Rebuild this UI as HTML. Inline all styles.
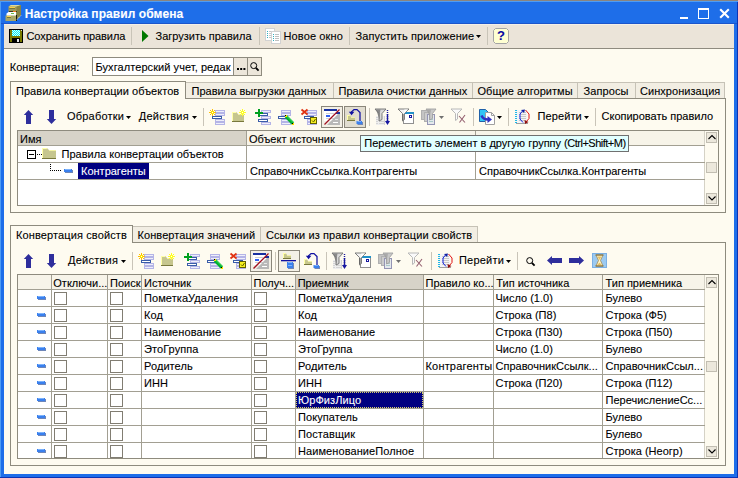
<!DOCTYPE html>
<html lang="ru">
<head>
<meta charset="utf-8">
<title>Настройка правил обмена</title>
<style>
html,body{margin:0;padding:0;}
body{width:738px;height:478px;overflow:hidden;position:relative;background:#FEFBF0;font-family:"Liberation Sans",sans-serif;font-size:11px;color:#000;-webkit-text-stroke-width:0.1px;}
.a{position:absolute;}
.t{position:absolute;white-space:nowrap;line-height:13px;height:13px;}
.win{left:0;top:0;width:738px;height:478px;background:#1E6EE9;}
.client{left:4px;top:24px;width:730px;height:450px;background:#FEFBF0;}
.title{left:24.7px;top:7px;font-size:12px;font-weight:bold;color:#fff;line-height:15px;height:15px;letter-spacing:0.07px;}
.tb{left:4px;top:24px;width:730px;height:24px;background:#EBE4D9;border-bottom:1px solid #8F8B80;}
.sep{position:absolute;width:1px;background:#C9C4B8;}
.panel{position:absolute;border:1px solid #8E8B7E;box-sizing:border-box;background:#FEFBF0;}
.tab{position:absolute;box-sizing:border-box;border:1px solid #C6C2B6;border-bottom:none;background:#F2EEE3;height:16px;top:1px;}
.tab.act{background:#FEFBF0;height:18px;top:0;border-color:#8E8B7E;z-index:2;}
.tab span{position:absolute;left:6px;top:1.5px;white-space:nowrap;line-height:13px;}
.tab.act span{top:2.5px;}
.grid{position:absolute;background:#fff;border:1px solid #8E8B7E;box-sizing:border-box;overflow:hidden;}
.hl{position:absolute;height:1px;background:#A29F92;}
.vl{position:absolute;width:1px;background:#A29F92;}
.hd{position:absolute;background:#F7F4E9;}
.hd.dk{background:#D7D3C8;}
.cb{position:absolute;width:13px;height:13px;box-sizing:border-box;border:1px solid #817D72;background:#fff;}
.sb{position:absolute;width:11px;height:11px;box-sizing:border-box;border:1px solid #C2BEB2;background:#ECE8DC;}
.btn{position:absolute;width:22px;height:22px;box-sizing:border-box;border:1px solid #8A867A;background:#F3F0E6;}
.ic{position:absolute;width:16px;height:16px;overflow:visible;}
.dash{position:absolute;width:9px;height:4px;}
svg{position:absolute;overflow:visible;}
</style>
</head>
<body>
<div class="a win"></div>
<div class="a" style="left:0;top:0;width:738px;height:1px;background:#8A847E"></div>
<div class="a" style="left:0;top:1px;width:738px;height:1px;background:#4E9CF5"></div>
<div class="a" style="left:0;top:1px;width:1px;height:477px;background:#4E9CF5"></div>
<div class="a" style="left:0;top:477px;width:738px;height:1px;background:#0C34B4"></div>
<div class="a" style="left:737px;top:2px;width:1px;height:476px;background:#0C34B4"></div>
<div class="a client"></div>
<div class="a" style="left:1px;top:23px;width:736px;height:1px;background:#1B55CB"></div>
<div class="t title">Настройка правил обмена</div>
<svg style="left:5px;top:4px" width="17" height="17" viewBox="0 0 17 17">
<polygon points="3.5,2.5 6,1 16,1 16,11 11.5,16 3.5,16" fill="#9C9A5C"/>
<polygon points="3.5,2.5 6,1 16,1 13.5,2.5" fill="#DDD99A"/>
<polygon points="11.5,2.5 16,1 16,11 11.5,16" fill="#858345"/>
<rect x="4.5" y="3" width="5.5" height="1" fill="#F8D048"/>
<rect x="4.5" y="4" width="5.5" height="1" fill="#77753C"/>
<rect x="4" y="7" width="8" height="1" fill="#38381E"/>
<rect x="8" y="7" width="3" height="1" fill="#F07818"/>
<polygon points="1.5,9.5 3.5,8 11,8 11,12 1.5,12" fill="#FFFFFF"/>
<rect x="6" y="9" width="3" height="1" fill="#68C048"/>
<rect x="0.5" y="11.5" width="10.5" height="5.5" fill="#A9A768"/>
<rect x="2" y="12" width="4" height="1" fill="#F8D048"/>
<rect x="2" y="13" width="4" height="1" fill="#77753C"/>
<rect x="11" y="11" width="1" height="6" fill="#1C1C10"/>
<path d="M12,15.5 L16,11.5" stroke="#fff" stroke-width="0.8" stroke-dasharray="1.2,1"/>
</svg>
<div class="a" style="left:680px;top:17px;width:8px;height:2px;background:#fff"></div>
<div class="a" style="left:698px;top:8px;width:11px;height:11px;box-sizing:border-box;border:1px solid #fff;border-top-width:2px"></div>
<svg style="left:719px;top:8px" width="11" height="11" viewBox="0 0 11 11"><path d="M1.2,1.2 L9.8,9.8 M9.8,1.2 L1.2,9.8" stroke="#fff" stroke-width="2.1" fill="none"/></svg>
<div class="a tb"></div>
<div class="a" style="left:4px;top:24px;width:730px;height:1px;background:#F4F0E8"></div>
<svg style="left:9px;top:29px" width="14" height="14" viewBox="0 0 14 14">
<rect x="0" y="0" width="14" height="14" fill="#000"/>
<rect x="1" y="1" width="12" height="12" fill="#7A7A00"/>
<defs><pattern id="dth" width="2" height="2" patternUnits="userSpaceOnUse"><rect width="2" height="2" fill="#00F0F0"/><rect width="1" height="1" fill="#D8FFFF"/><rect x="1" y="1" width="1" height="1" fill="#D8FFFF"/></pattern></defs><rect x="3" y="1" width="8" height="6" fill="url(#dth)"/>
<rect x="3" y="9" width="8" height="4" fill="#000"/>
<rect x="8" y="10" width="2" height="3" fill="#E8E8E8"/>
<rect x="12" y="1" width="1" height="1" fill="#E0E0E0"/>
</svg>
<div class="t" style="left:26.5px;top:29.5px;letter-spacing:-0.1px">Сохранить правила</div>
<div class="sep" style="left:131px;top:27px;height:18px"></div>
<svg style="left:142px;top:30px" width="7" height="12" viewBox="0 0 7 12"><polygon points="0,0 6.5,6 0,12" fill="#007800"/></svg>
<div class="t" style="left:155.5px;top:29.5px">Загрузить правила</div>
<div class="sep" style="left:259px;top:27px;height:18px"></div>
<svg style="left:265px;top:28px" width="16" height="16" viewBox="0 0 16 16">
<rect x="0.5" y="0.5" width="9" height="12" fill="#fff" stroke="#D2D2D2"/>
<g fill="#30B0C0"><rect x="2" y="3" width="1" height="1"/><rect x="2" y="5" width="1" height="1"/><rect x="2" y="7" width="1" height="1"/><rect x="2" y="9" width="1" height="1"/></g>
<g fill="#C8C8C8"><rect x="4" y="3" width="4" height="1"/><rect x="4" y="5" width="4" height="1"/><rect x="4" y="7" width="4" height="1"/><rect x="4" y="9" width="4" height="1"/></g>
<rect x="6.5" y="3.5" width="9" height="12" fill="#fff" stroke="#D2D2D2"/>
<g fill="#30B0C0"><rect x="8" y="6" width="1" height="1"/><rect x="8" y="8" width="1" height="1"/><rect x="8" y="10" width="1" height="1"/><rect x="8" y="12" width="1" height="1"/></g>
<g fill="#C0C0C0"><rect x="10" y="6" width="4" height="1"/><rect x="10" y="8" width="4" height="1"/><rect x="10" y="10" width="4" height="1"/><rect x="10" y="12" width="4" height="1"/></g>
</svg>
<div class="t" style="left:283.5px;top:29.5px;letter-spacing:0.12px">Новое окно</div>
<div class="sep" style="left:349px;top:27px;height:18px"></div>
<div class="t" style="left:355.5px;top:29.5px;letter-spacing:0.08px">Запустить приложение</div>
<svg style="left:476px;top:35px" width="5" height="3" viewBox="0 0 5 3"><polygon points="0,0 5,0 2.5,3" fill="#000"/></svg>
<div class="sep" style="left:487px;top:27px;height:18px"></div>
<svg style="left:493px;top:28px" width="16" height="16" viewBox="0 0 16 16">
<polygon points="2.5,0.5 13.5,0.5 15.5,2.5 15.5,13.5 13.5,15.5 2.5,15.5 0.5,13.5 0.5,2.5" fill="#FFFFD2" stroke="#A4A4A4"/>
</svg>
<div class="t" style="left:497px;top:29px;font-weight:bold;font-size:13px;color:#0808A0;line-height:14px;height:14px">?</div>
<div class="t" style="left:9.7px;top:60.5px;letter-spacing:0.08px">Конвертация:</div>
<div class="a" style="left:92px;top:57px;width:170px;height:19px;box-sizing:border-box;border:1px solid #8E8B7E;background:#fff"></div>
<div class="t" style="left:95.5px;top:61px;letter-spacing:0.07px">Бухгалтерский учет, редак</div>
<div class="a" style="left:233px;top:58px;width:15px;height:17px;background:#ECE6DA;border-left:1px solid #8E8B7E;border-right:1px solid #8E8B7E;box-sizing:border-box"></div>
<div class="a" style="left:248px;top:58px;width:13px;height:17px;background:#ECE6DA"></div>
<div class="a" style="left:237px;top:68.2px;width:1.7px;height:1.8px;background:#000;box-shadow:3.2px 0 0 #000,6.4px 0 0 #000"></div>
<svg style="left:250px;top:62px" width="10" height="10" viewBox="0 0 10 10"><circle cx="3.7" cy="3.6" r="3" fill="none" stroke="#000" stroke-width="1"/><path d="M5.9,5.9 L8.6,8.6" stroke="#000" stroke-width="1.9"/></svg>
<div class="panel" style="left:10px;top:98px;width:716px;height:115px"></div>
<div class="a" style="left:10px;top:81px;width:716px;height:18px">
  <div class="tab act" style="left:0px;width:176px"><span style="left:5px;letter-spacing:0.04px">Правила конвертации объектов</span></div>
  <div class="tab" style="left:175px;width:149px"><span style="left:5.5px;letter-spacing:0.03px">Правила выгрузки данных</span></div>
  <div class="tab" style="left:323px;width:140px"><span style="left:4.5px;letter-spacing:0.03px">Правила очистки данных</span></div>
  <div class="tab" style="left:462px;width:106px"><span style="left:4.5px;letter-spacing:0.05px">Общие алгоритмы</span></div>
  <div class="tab" style="left:567px;width:59px"><span style="left:5.5px;letter-spacing:0.1px">Запросы</span></div>
  <div class="tab" style="left:625px;width:90px"><span style="left:4px;letter-spacing:0.05px">Синхронизация</span></div>
</div>
<svg style="left:24px;top:110px" width="10" height="14" viewBox="0 0 10 14"><polygon points="4.5,0 9.2,5 7,5 7,14 2,14 2,5 -0.2,5" fill="#2E2E9C"/></svg>
<svg style="left:47px;top:110px" width="10" height="14" viewBox="0 0 10 14"><polygon points="2,0 7,0 7,9 9.2,9 4.5,14 -0.2,9 2,9" fill="#2E2E9C"/></svg>
<div class="t" style="left:67px;top:110.3px;letter-spacing:0.2px">Обработки</div>
<svg style="left:126px;top:116px" width="5" height="3" viewBox="0 0 5 3"><polygon points="0,0 5,0 2.5,3" fill="#000"/></svg>
<div class="t" style="left:138.7px;top:110.3px;letter-spacing:0.25px">Действия</div>
<svg style="left:192px;top:116px" width="5" height="3" viewBox="0 0 5 3"><polygon points="0,0 5,0 2.5,3" fill="#000"/></svg>
<div class="sep" style="left:203px;top:108px;height:18px"></div>
<svg class="ic" style="left:209px;top:109px" viewBox="0 0 16 16"><rect x="6" y="1" width="10" height="3" fill="#B4B4E6"/><rect x="7" y="2" width="8" height="1" fill="#EEEEFA"/><rect x="6" y="4" width="10" height="3" fill="#B4B4E6"/><rect x="7" y="5" width="8" height="1" fill="#EEEEFA"/><rect x="3" y="7" width="10" height="3" fill="#3A5CA8"/><rect x="4" y="8" width="8" height="1" fill="#fff"/><rect x="6" y="10" width="10" height="3" fill="#B4B4E6"/><rect x="7" y="11" width="8" height="1" fill="#EEEEFA"/><rect x="6" y="13" width="10" height="3" fill="#B4B4E6"/><rect x="7" y="14" width="8" height="1" fill="#EEEEFA"/><g stroke="#FFC000" stroke-width="1"><path d="M3.5,0 V7 M0,3.5 H7 M1,1 L6,6 M6,1 L1,6"/></g><rect x="2" y="2" width="3" height="3" fill="#FFE000"/><rect x="3" y="3" width="1" height="1" fill="#fff"/></svg>
<svg class="ic" style="left:232px;top:109px" viewBox="0 0 16 16"><polygon points="0,3 4.199999999999999,3 6.0,5 12,5 12,13 0,13" fill="#C6C68E"/><rect x="0" y="3" width="1" height="10" fill="#FFFFA8"/><rect x="0" y="3" width="4.199999999999999" height="1" fill="#FFFFA8"/><rect x="6.0" y="5" width="6.0" height="1" fill="#F2F2A4"/><rect x="0" y="12" width="12" height="1" fill="#78783C"/><g stroke="#FFFF20" stroke-width="1"><path d="M10.5,0 V7 M7,3.5 H14 M8,1 L13,6 M13,1 L8,6"/></g><rect x="10" y="3" width="1" height="1" fill="#fff"/></svg>
<svg class="ic" style="left:255px;top:109px" viewBox="0 0 16 16"><rect x="6" y="1" width="10" height="3" fill="#B4B4E6"/><rect x="7" y="2" width="8" height="1" fill="#EEEEFA"/><rect x="3" y="4" width="10" height="3" fill="#3A5CA8"/><rect x="4" y="5" width="8" height="1" fill="#fff"/><rect x="6" y="7" width="10" height="3" fill="#B4B4E6"/><rect x="7" y="8" width="8" height="1" fill="#EEEEFA"/><rect x="3" y="10" width="10" height="3" fill="#3A5CA8"/><rect x="4" y="11" width="8" height="1" fill="#fff"/><rect x="6" y="13" width="10" height="3" fill="#B4B4E6"/><rect x="7" y="14" width="8" height="1" fill="#EEEEFA"/><rect x="0" y="3" width="8" height="2" fill="#00A020"/><rect x="3" y="0" width="2" height="8" fill="#00A020"/></svg>
<svg class="ic" style="left:278px;top:109px" viewBox="0 0 16 16"><rect x="3" y="1" width="10" height="3" fill="#B4B4E6"/><rect x="4" y="2" width="8" height="1" fill="#EEEEFA"/><rect x="3" y="4" width="10" height="3" fill="#B4B4E6"/><rect x="4" y="5" width="8" height="1" fill="#EEEEFA"/><rect x="0" y="7" width="10" height="3" fill="#3A5CA8"/><rect x="1" y="8" width="8" height="1" fill="#fff"/><rect x="3" y="10" width="10" height="3" fill="#B4B4E6"/><rect x="4" y="11" width="8" height="1" fill="#EEEEFA"/><rect x="3" y="13" width="10" height="3" fill="#B4B4E6"/><rect x="4" y="14" width="8" height="1" fill="#EEEEFA"/><path d="M8,7.5 L15,14.5" stroke="#00B030" stroke-width="3.2"/><path d="M8.6,6.9 L15.6,13.9" stroke="#40E060" stroke-width="1"/><rect x="7" y="6" width="2" height="2" fill="#FFE000"/><rect x="7" y="6" width="1" height="1" fill="#000"/><rect x="14" y="14" width="2" height="2" fill="#FFE000"/><rect x="14" y="14" width="1" height="1" fill="#000"/></svg>
<svg class="ic" style="left:301px;top:109px" viewBox="0 0 16 16"><rect x="6" y="1" width="10" height="3" fill="#B4B4E6"/><rect x="7" y="2" width="8" height="1" fill="#EEEEFA"/><rect x="6" y="4" width="10" height="3" fill="#B4B4E6"/><rect x="7" y="5" width="8" height="1" fill="#EEEEFA"/><rect x="3" y="7" width="10" height="3" fill="#3A5CA8"/><rect x="4" y="8" width="8" height="1" fill="#fff"/><rect x="6" y="10" width="10" height="3" fill="#B4B4E6"/><rect x="7" y="11" width="8" height="1" fill="#EEEEFA"/><rect x="6" y="13" width="10" height="3" fill="#B4B4E6"/><rect x="7" y="14" width="8" height="1" fill="#EEEEFA"/><path d="M0.5,0.5 L6.5,5.5 M6.5,0.5 L0.5,5.5" stroke="#E03010" stroke-width="1.8"/><rect x="9.5" y="8.5" width="6" height="6" fill="#F8F020" stroke="#606000"/><path d="M11,11.5 L12.5,13 L14.5,10" stroke="#606000" stroke-width="1" fill="none"/></svg>
<div class="btn" style="left:321px;top:106px"></div>
<svg class="ic" style="left:324px;top:109px" viewBox="0 0 16 16"><rect x="0" y="0" width="13" height="12" fill="#fff"/><rect x="0" y="0" width="13" height="2" fill="#1830A0"/><rect x="2" y="4" width="8" height="1" fill="#D0D0D0"/><rect x="2" y="6" width="4" height="2" fill="#3060F0"/><rect x="2" y="9" width="8" height="1" fill="#D0D0D0"/><polygon points="16,3 16,16 3,16" fill="#B8B8B8"/><rect x="12" y="3" width="4" height="2" fill="#1830A0"/><rect x="9" y="13" width="5" height="1" fill="#fff"/><rect x="11" y="10" width="3" height="1" fill="#E8E8E8"/><path d="M0.5,15.5 L15.5,0.5" stroke="#A01020" stroke-width="1.3"/></svg>
<div class="btn" style="left:344px;top:106px;background:#E1DDD0"></div>
<svg class="ic" style="left:347px;top:109px" viewBox="0 0 16 16"><polygon points="0,6 2.8,6 4.0,8 8,8 8,12 0,12" fill="#C6C68E"/><rect x="0" y="6" width="1" height="6" fill="#FFFFA8"/><rect x="0" y="6" width="2.8" height="1" fill="#FFFFA8"/><rect x="4.0" y="8" width="4.0" height="1" fill="#F2F2A4"/><rect x="0" y="11" width="8" height="1" fill="#78783C"/><path d="M4.6,4 L4.6,2.8 L7,0.6 L10,0.6 L13,3.5 L13,12" stroke="#1010A0" stroke-width="1.25" fill="none"/><polygon points="1.8,2.8 7.4,2.8 4.6,6.2" fill="#1010A0"/><rect x="10.5" y="13" width="5.5" height="3" fill="#6E86B8"/><rect x="9.5" y="12" width="5.5" height="3" fill="#3A80EE"/><rect x="10.5" y="12" width="3.5" height="1" fill="#7CB2FA"/></svg>
<div class="sep" style="left:369px;top:108px;height:18px"></div>
<svg class="ic" style="left:375px;top:109px" viewBox="0 0 16 16"><g fill="#D4D4D4"><rect x="1" y="7" width="9" height="9" fill="#EEEEEE"/><rect x="1" y="8" width="2" height="1"/><rect x="1" y="10" width="2" height="1"/><rect x="1" y="12" width="2" height="1"/><rect x="1" y="14" width="2" height="1"/><rect x="4" y="12" width="5" height="1"/><rect x="4" y="14" width="5" height="1"/><rect x="9" y="7" width="1" height="9"/></g><polygon points="0,0 11,0 7.0,4.5 7.0,10.5 4.0,12 4.0,4.5" fill="#D8D8D8" stroke="#707070" stroke-width="0.9"/><polygon points="1,0.5 5.5,0.5 4.7,5 4.7,11" fill="#707070" opacity="0.75"/><path d="M12.5,1 V14" stroke="#1818A0" stroke-width="1.4" stroke-dasharray="1,1" /><path d="M12.5,5 V14" stroke="#1818A0" stroke-width="1.4"/><polygon points="10,12 15,12 12.5,16" fill="#1818A0"/></svg>
<svg class="ic" style="left:398px;top:109px" viewBox="0 0 16 16"><rect x="5.5" y="3.5" width="10" height="11" fill="#fff" stroke="#909090"/><rect x="6" y="3" width="10" height="2" fill="#2090C8"/><rect x="11" y="6" width="3" height="3" fill="#1818A0"/><rect x="12" y="7" width="1" height="1" fill="#fff"/><polygon points="0,0 11,0 6.5,4.5 6.5,10.5 4.5,12 4.5,4.5" fill="#F4F4F4" stroke="#707070" stroke-width="0.9"/><polygon points="6,4.5 10,0.5 6.3,0.5" fill="#fff"/><path d="M5,5 V11" stroke="#505050" stroke-width="1"/></svg>
<svg class="ic" style="left:421px;top:109px" viewBox="0 0 16 16"><rect x="0.5" y="1.5" width="7" height="9" fill="#C4C4C4" stroke="#B0B0B0"/><rect x="3.5" y="3.5" width="7" height="9" fill="#CCCCCC" stroke="#B0B0B0"/><rect x="6.5" y="5.5" width="7" height="10" fill="#E4E8EC" stroke="#9494B4"/><g fill="#A8C8C8"><rect x="8" y="8" width="4" height="1"/><rect x="8" y="10" width="4" height="1"/><rect x="8" y="12" width="4" height="1"/></g><polygon points="5,0 15,0 11.5,4.5 11.5,9.5 8.5,11 8.5,4.5" fill="#C8C8C8" stroke="#A0A0A0" stroke-width="0.9"/><polygon points="6,0.5 10.0,0.5 9.2,5 9.2,10" fill="#A0A0A0" opacity="0.75"/></svg>
<svg style="left:439px;top:116px" width="5" height="3" viewBox="0 0 5 3"><polygon points="0,0 5,0 2.5,3" fill="#707070"/></svg>
<svg class="ic" style="left:451px;top:109px" viewBox="0 0 16 16"><polygon points="0,0 11,0 6.5,4.5 6.5,10 4.5,11.5 4.5,4.5" fill="#FAFAFA" stroke="#B8B8B8" stroke-width="1"/><path d="M8,7 L14,13.5 M14,6 L8.5,13.5" stroke="#946070" stroke-width="1.1"/></svg>
<div class="sep" style="left:473px;top:108px;height:18px"></div>
<svg class="ic" style="left:479px;top:109px" viewBox="0 0 16 16"><polygon points="0.5,0.5 6.5,0.5 9.5,3.5 9.5,12.5 0.5,12.5" fill="#30C4F4" stroke="#2060A8"/><polygon points="6.5,3.5 12.5,3.5 15.5,6.5 15.5,15.5 6.5,15.5" fill="#fff" stroke="#A0A0A0"/><path d="M12.5,3.5 V6.5 H15.5" stroke="#A0A0A0" fill="none"/><path d="M2.5,6.5 Q4,10.5 9,10.5" stroke="#3030C0" stroke-width="2.4" fill="none"/><polygon points="8.5,7 13,10.5 8.5,14" fill="#3030C0"/></svg>
<svg style="left:497px;top:116px" width="5" height="3" viewBox="0 0 5 3"><polygon points="0,0 5,0 2.5,3" fill="#000"/></svg>
<div class="sep" style="left:508px;top:108px;height:18px"></div>
<svg class="ic" style="left:515px;top:109px" viewBox="0 0 16 16"><rect x="1" y="1" width="11" height="14" fill="#F4F4F4"/><rect x="1" y="14" width="12" height="1" fill="#A0A0A0"/><g fill="#20B8E8"><rect x="0" y="1" width="2" height="1"/><rect x="0" y="3" width="2" height="1"/><rect x="0" y="5" width="2" height="1"/><rect x="0" y="7" width="2" height="1"/><rect x="0" y="9" width="2" height="1"/><rect x="0" y="11" width="2" height="1"/><rect x="0" y="13" width="2" height="1"/></g><g fill="#C8C8C8"><rect x="4" y="3" width="7" height="1"/><rect x="4" y="5" width="7" height="1"/><rect x="4" y="7" width="7" height="1"/><rect x="4" y="9" width="7" height="1"/><rect x="4" y="11" width="7" height="1"/></g><path d="M8,13.5 L5,10 V5 L8,1.5" stroke="#1020E0" stroke-width="1" fill="none"/><polygon points="6,1 10,0.5 9,4" fill="#1020A0"/><path d="M10.5,1 L14,5 V9.5 L11,13" stroke="#E01010" stroke-width="1" fill="none"/><polygon points="9.5,11 13.5,13 10,15" fill="#901010"/></svg>
<div class="t" style="left:537.5px;top:110.3px;letter-spacing:0.1px">Перейти</div>
<svg style="left:584px;top:116px" width="5" height="3" viewBox="0 0 5 3"><polygon points="0,0 5,0 2.5,3" fill="#000"/></svg>
<div class="sep" style="left:595px;top:108px;height:18px"></div>
<div class="t" style="left:601.5px;top:110.3px">Скопировать правило</div>
<div class="grid" style="left:17px;top:130px;width:702px;height:76px">
  <div class="hd dk" style="left:0;top:0;width:228px;height:14px"></div>
  <div class="hd" style="left:229px;top:0;width:458px;height:14px"></div>
  <div class="a" style="left:687px;top:0;width:13px;height:74px;background:#FEFBF0"></div>
  <div class="vl" style="left:686px;top:0;height:74px;background:#D5D2C6"></div>
  <div class="hl" style="left:0;top:14px;width:687px"></div>
  <div class="hl" style="left:0;top:31px;width:687px"></div>
  <div class="hl" style="left:0;top:48px;width:687px"></div>
  <div class="vl" style="left:228px;top:0;height:49px"></div>
  <div class="vl" style="left:457px;top:0;height:49px"></div>
  <div class="t" style="left:2px;top:1.5px">Имя</div>
  <div class="t" style="left:231px;top:1.5px">Объект источник</div>
  <div class="a" style="left:9px;top:19px;width:9px;height:9px;box-sizing:border-box;border:1px solid #000;background:#fff"></div>
  <div class="a" style="left:11px;top:23px;width:5px;height:1px;background:#000"></div>
  <div class="a" style="left:19px;top:23px;width:5px;height:1px;background:repeating-linear-gradient(90deg,#000 0 1px,transparent 1px 2px)"></div>
  <svg style="left:24px;top:17px" width="14" height="11" viewBox="0 0 14 11"><polygon points="0,0 4.8999999999999995,0 7.0,2 14,2 14,11 0,11" fill="#C6C68E"/><rect x="0" y="0" width="1" height="11" fill="#FFFFA8"/><rect x="0" y="0" width="4.8999999999999995" height="1" fill="#FFFFA8"/><rect x="7.0" y="2" width="7.0" height="1" fill="#F2F2A4"/><rect x="0" y="10" width="14" height="1" fill="#78783C"/></svg>
  <div class="t" style="left:43.5px;top:17px">Правила конвертации объектов</div>
  <div class="a" style="left:32px;top:33px;width:1px;height:7px;background:repeating-linear-gradient(180deg,#000 0 1px,transparent 1px 2px)"></div>
  <div class="a" style="left:32px;top:39px;width:11px;height:1px;background:repeating-linear-gradient(90deg,#000 0 1px,transparent 1px 2px)"></div>
  <svg class="dash" style="left:46px;top:38px" viewBox="0 0 9 4"><rect x="1" y="1" width="8" height="3" fill="#6E86B8"/><rect x="0" y="0" width="8" height="3" fill="#3A80EE"/><rect x="1" y="0" width="6" height="1" fill="#7CB2FA"/></svg>
  <div class="a" style="left:60px;top:32px;width:71px;height:16px;background:#000080"></div>
  <div class="t" style="left:63px;top:34px;color:#fff">Контрагенты</div>
  <div class="t" style="left:232px;top:34px">СправочникСсылка.Контрагенты</div>
  <div class="t" style="left:461px;top:34px">СправочникСсылка.Контрагенты</div>
  <div class="sb" style="left:688px;top:1px"></div><svg style="left:690px;top:3px" width="8" height="7" viewBox="0 0 8 7"><path d="M0.5,5 L4,1.5 L7.5,5" stroke="#000" stroke-width="1.1" fill="none"/></svg>
  <div class="sb" style="left:688px;top:31px"></div>
  <div class="sb" style="left:688px;top:62px"></div><svg style="left:690px;top:64px" width="8" height="7" viewBox="0 0 8 7"><path d="M0.5,1.5 L4,5 L7.5,1.5" stroke="#000" stroke-width="1.1" fill="none"/></svg>
</div>
<div class="a" style="left:360px;top:135px;width:269px;height:17px;box-sizing:border-box;border:1px solid #707070;background:#E1FFFF"></div>
<div class="t" style="left:364.3px;top:137.2px">Переместить элемент в другую группу <span style="letter-spacing:-0.5px">(Ctrl+Shift+M)</span></div>
<div class="panel" style="left:10px;top:242px;width:716px;height:224px"></div>
<div class="a" style="left:10px;top:225px;width:716px;height:18px">
  <div class="tab act" style="left:0px;width:123px"><span style="left:5px;letter-spacing:0.12px">Конвертация свойств</span></div>
  <div class="tab" style="left:122px;width:129px"><span style="left:4.5px;letter-spacing:0.08px">Конвертация значений</span></div>
  <div class="tab" style="left:250px;width:218px"><span style="left:5px;letter-spacing:0.09px">Ссылки из правил конвертации свойств</span></div>
</div>
<svg style="left:24px;top:254px" width="10" height="14" viewBox="0 0 10 14"><polygon points="4.5,0 9.2,5 7,5 7,14 2,14 2,5 -0.2,5" fill="#2E2E9C"/></svg>
<svg style="left:47px;top:254px" width="10" height="14" viewBox="0 0 10 14"><polygon points="2,0 7,0 7,9 9.2,9 4.5,14 -0.2,9 2,9" fill="#2E2E9C"/></svg>
<div class="t" style="left:68px;top:254.3px;letter-spacing:0.25px">Действия</div>
<svg style="left:121px;top:260px" width="5" height="3" viewBox="0 0 5 3"><polygon points="0,0 5,0 2.5,3" fill="#000"/></svg>
<div class="sep" style="left:132px;top:252px;height:18px"></div>
<svg class="ic" style="left:138px;top:253px" viewBox="0 0 16 16"><rect x="6" y="1" width="10" height="3" fill="#B4B4E6"/><rect x="7" y="2" width="8" height="1" fill="#EEEEFA"/><rect x="6" y="4" width="10" height="3" fill="#B4B4E6"/><rect x="7" y="5" width="8" height="1" fill="#EEEEFA"/><rect x="3" y="7" width="10" height="3" fill="#3A5CA8"/><rect x="4" y="8" width="8" height="1" fill="#fff"/><rect x="6" y="10" width="10" height="3" fill="#B4B4E6"/><rect x="7" y="11" width="8" height="1" fill="#EEEEFA"/><rect x="6" y="13" width="10" height="3" fill="#B4B4E6"/><rect x="7" y="14" width="8" height="1" fill="#EEEEFA"/><g stroke="#FFC000" stroke-width="1"><path d="M3.5,0 V7 M0,3.5 H7 M1,1 L6,6 M6,1 L1,6"/></g><rect x="2" y="2" width="3" height="3" fill="#FFE000"/><rect x="3" y="3" width="1" height="1" fill="#fff"/></svg>
<svg class="ic" style="left:161px;top:253px" viewBox="0 0 16 16"><polygon points="0,3 4.199999999999999,3 6.0,5 12,5 12,13 0,13" fill="#C6C68E"/><rect x="0" y="3" width="1" height="10" fill="#FFFFA8"/><rect x="0" y="3" width="4.199999999999999" height="1" fill="#FFFFA8"/><rect x="6.0" y="5" width="6.0" height="1" fill="#F2F2A4"/><rect x="0" y="12" width="12" height="1" fill="#78783C"/><g stroke="#FFFF20" stroke-width="1"><path d="M10.5,0 V7 M7,3.5 H14 M8,1 L13,6 M13,1 L8,6"/></g><rect x="10" y="3" width="1" height="1" fill="#fff"/></svg>
<svg class="ic" style="left:184px;top:253px" viewBox="0 0 16 16"><rect x="6" y="1" width="10" height="3" fill="#B4B4E6"/><rect x="7" y="2" width="8" height="1" fill="#EEEEFA"/><rect x="3" y="4" width="10" height="3" fill="#3A5CA8"/><rect x="4" y="5" width="8" height="1" fill="#fff"/><rect x="6" y="7" width="10" height="3" fill="#B4B4E6"/><rect x="7" y="8" width="8" height="1" fill="#EEEEFA"/><rect x="3" y="10" width="10" height="3" fill="#3A5CA8"/><rect x="4" y="11" width="8" height="1" fill="#fff"/><rect x="6" y="13" width="10" height="3" fill="#B4B4E6"/><rect x="7" y="14" width="8" height="1" fill="#EEEEFA"/><rect x="0" y="3" width="8" height="2" fill="#00A020"/><rect x="3" y="0" width="2" height="8" fill="#00A020"/></svg>
<svg class="ic" style="left:207px;top:253px" viewBox="0 0 16 16"><rect x="3" y="1" width="10" height="3" fill="#B4B4E6"/><rect x="4" y="2" width="8" height="1" fill="#EEEEFA"/><rect x="3" y="4" width="10" height="3" fill="#B4B4E6"/><rect x="4" y="5" width="8" height="1" fill="#EEEEFA"/><rect x="0" y="7" width="10" height="3" fill="#3A5CA8"/><rect x="1" y="8" width="8" height="1" fill="#fff"/><rect x="3" y="10" width="10" height="3" fill="#B4B4E6"/><rect x="4" y="11" width="8" height="1" fill="#EEEEFA"/><rect x="3" y="13" width="10" height="3" fill="#B4B4E6"/><rect x="4" y="14" width="8" height="1" fill="#EEEEFA"/><path d="M8,7.5 L15,14.5" stroke="#00B030" stroke-width="3.2"/><path d="M8.6,6.9 L15.6,13.9" stroke="#40E060" stroke-width="1"/><rect x="7" y="6" width="2" height="2" fill="#FFE000"/><rect x="7" y="6" width="1" height="1" fill="#000"/><rect x="14" y="14" width="2" height="2" fill="#FFE000"/><rect x="14" y="14" width="1" height="1" fill="#000"/></svg>
<svg class="ic" style="left:230px;top:253px" viewBox="0 0 16 16"><rect x="6" y="1" width="10" height="3" fill="#B4B4E6"/><rect x="7" y="2" width="8" height="1" fill="#EEEEFA"/><rect x="6" y="4" width="10" height="3" fill="#B4B4E6"/><rect x="7" y="5" width="8" height="1" fill="#EEEEFA"/><rect x="3" y="7" width="10" height="3" fill="#3A5CA8"/><rect x="4" y="8" width="8" height="1" fill="#fff"/><rect x="6" y="10" width="10" height="3" fill="#B4B4E6"/><rect x="7" y="11" width="8" height="1" fill="#EEEEFA"/><rect x="6" y="13" width="10" height="3" fill="#B4B4E6"/><rect x="7" y="14" width="8" height="1" fill="#EEEEFA"/><path d="M0.5,0.5 L6.5,5.5 M6.5,0.5 L0.5,5.5" stroke="#E03010" stroke-width="1.8"/><rect x="9.5" y="8.5" width="6" height="6" fill="#F8F020" stroke="#606000"/><path d="M11,11.5 L12.5,13 L14.5,10" stroke="#606000" stroke-width="1" fill="none"/></svg>
<div class="btn" style="left:250px;top:250px"></div>
<svg class="ic" style="left:253px;top:253px" viewBox="0 0 16 16"><rect x="0" y="0" width="13" height="12" fill="#fff"/><rect x="0" y="0" width="13" height="2" fill="#1830A0"/><rect x="2" y="4" width="8" height="1" fill="#D0D0D0"/><rect x="2" y="6" width="4" height="2" fill="#3060F0"/><rect x="2" y="9" width="8" height="1" fill="#D0D0D0"/><polygon points="16,3 16,16 3,16" fill="#B8B8B8"/><rect x="12" y="3" width="4" height="2" fill="#1830A0"/><rect x="9" y="13" width="5" height="1" fill="#fff"/><rect x="11" y="10" width="3" height="1" fill="#E8E8E8"/><path d="M0.5,15.5 L15.5,0.5" stroke="#A01020" stroke-width="1.3"/></svg>
<div class="sep" style="left:275px;top:252px;height:18px"></div>
<div class="btn" style="left:278px;top:250px"></div>
<svg class="ic" style="left:281px;top:253px" viewBox="0 0 16 16"><polygon points="2,0 4.8,0 6.0,2 10,2 10,6 2,6" fill="#C6C68E"/><rect x="2" y="0" width="1" height="6" fill="#FFFFA8"/><rect x="2" y="0" width="2.8" height="1" fill="#FFFFA8"/><rect x="6.0" y="2" width="4.0" height="1" fill="#F2F2A4"/><rect x="2" y="5" width="8" height="1" fill="#78783C"/><rect x="0" y="7" width="15" height="1.3" fill="#1010A0"/><rect x="7" y="10" width="6" height="3" fill="#6E86B8"/><rect x="6" y="9" width="6" height="3" fill="#3A80EE"/><rect x="7" y="9" width="4" height="1" fill="#7CB2FA"/><rect x="7" y="13" width="6" height="3" fill="#6E86B8"/><rect x="6" y="12" width="6" height="3" fill="#3A80EE"/><rect x="7" y="12" width="4" height="1" fill="#7CB2FA"/></svg>
<svg class="ic" style="left:304px;top:253px" viewBox="0 0 16 16"><polygon points="0,6 2.8,6 4.0,8 8,8 8,12 0,12" fill="#C6C68E"/><rect x="0" y="6" width="1" height="6" fill="#FFFFA8"/><rect x="0" y="6" width="2.8" height="1" fill="#FFFFA8"/><rect x="4.0" y="8" width="4.0" height="1" fill="#F2F2A4"/><rect x="0" y="11" width="8" height="1" fill="#78783C"/><path d="M4.6,4 L4.6,2.8 L7,0.6 L10,0.6 L13,3.5 L13,12" stroke="#1010A0" stroke-width="1.25" fill="none"/><polygon points="1.8,2.8 7.4,2.8 4.6,6.2" fill="#1010A0"/><rect x="10.5" y="13" width="5.5" height="3" fill="#6E86B8"/><rect x="9.5" y="12" width="5.5" height="3" fill="#3A80EE"/><rect x="10.5" y="12" width="3.5" height="1" fill="#7CB2FA"/></svg>
<div class="sep" style="left:326px;top:252px;height:18px"></div>
<svg class="ic" style="left:332px;top:253px" viewBox="0 0 16 16"><g fill="#D4D4D4"><rect x="1" y="7" width="9" height="9" fill="#EEEEEE"/><rect x="1" y="8" width="2" height="1"/><rect x="1" y="10" width="2" height="1"/><rect x="1" y="12" width="2" height="1"/><rect x="1" y="14" width="2" height="1"/><rect x="4" y="12" width="5" height="1"/><rect x="4" y="14" width="5" height="1"/><rect x="9" y="7" width="1" height="9"/></g><polygon points="0,0 11,0 7.0,4.5 7.0,10.5 4.0,12 4.0,4.5" fill="#D8D8D8" stroke="#707070" stroke-width="0.9"/><polygon points="1,0.5 5.5,0.5 4.7,5 4.7,11" fill="#707070" opacity="0.75"/><path d="M12.5,1 V14" stroke="#1818A0" stroke-width="1.4" stroke-dasharray="1,1" /><path d="M12.5,5 V14" stroke="#1818A0" stroke-width="1.4"/><polygon points="10,12 15,12 12.5,16" fill="#1818A0"/></svg>
<svg class="ic" style="left:355px;top:253px" viewBox="0 0 16 16"><rect x="5.5" y="3.5" width="10" height="11" fill="#fff" stroke="#909090"/><rect x="6" y="3" width="10" height="2" fill="#2090C8"/><rect x="11" y="6" width="3" height="3" fill="#1818A0"/><rect x="12" y="7" width="1" height="1" fill="#fff"/><polygon points="0,0 11,0 6.5,4.5 6.5,10.5 4.5,12 4.5,4.5" fill="#F4F4F4" stroke="#707070" stroke-width="0.9"/><polygon points="6,4.5 10,0.5 6.3,0.5" fill="#fff"/><path d="M5,5 V11" stroke="#505050" stroke-width="1"/></svg>
<svg class="ic" style="left:378px;top:253px" viewBox="0 0 16 16"><rect x="0.5" y="1.5" width="7" height="9" fill="#C4C4C4" stroke="#B0B0B0"/><rect x="3.5" y="3.5" width="7" height="9" fill="#CCCCCC" stroke="#B0B0B0"/><rect x="6.5" y="5.5" width="7" height="10" fill="#E4E8EC" stroke="#9494B4"/><g fill="#A8C8C8"><rect x="8" y="8" width="4" height="1"/><rect x="8" y="10" width="4" height="1"/><rect x="8" y="12" width="4" height="1"/></g><polygon points="5,0 15,0 11.5,4.5 11.5,9.5 8.5,11 8.5,4.5" fill="#C8C8C8" stroke="#A0A0A0" stroke-width="0.9"/><polygon points="6,0.5 10.0,0.5 9.2,5 9.2,10" fill="#A0A0A0" opacity="0.75"/></svg>
<svg style="left:396px;top:260px" width="5" height="3" viewBox="0 0 5 3"><polygon points="0,0 5,0 2.5,3" fill="#707070"/></svg>
<svg class="ic" style="left:408px;top:253px" viewBox="0 0 16 16"><polygon points="0,0 11,0 6.5,4.5 6.5,10 4.5,11.5 4.5,4.5" fill="#FAFAFA" stroke="#B8B8B8" stroke-width="1"/><path d="M8,7 L14,13.5 M14,6 L8.5,13.5" stroke="#946070" stroke-width="1.1"/></svg>
<div class="sep" style="left:431px;top:252px;height:18px"></div>
<svg class="ic" style="left:438px;top:253px" viewBox="0 0 16 16"><rect x="1" y="1" width="11" height="14" fill="#F4F4F4"/><rect x="1" y="14" width="12" height="1" fill="#A0A0A0"/><g fill="#20B8E8"><rect x="0" y="1" width="2" height="1"/><rect x="0" y="3" width="2" height="1"/><rect x="0" y="5" width="2" height="1"/><rect x="0" y="7" width="2" height="1"/><rect x="0" y="9" width="2" height="1"/><rect x="0" y="11" width="2" height="1"/><rect x="0" y="13" width="2" height="1"/></g><g fill="#C8C8C8"><rect x="4" y="3" width="7" height="1"/><rect x="4" y="5" width="7" height="1"/><rect x="4" y="7" width="7" height="1"/><rect x="4" y="9" width="7" height="1"/><rect x="4" y="11" width="7" height="1"/></g><path d="M8,13.5 L5,10 V5 L8,1.5" stroke="#1020E0" stroke-width="1" fill="none"/><polygon points="6,1 10,0.5 9,4" fill="#1020A0"/><path d="M10.5,1 L14,5 V9.5 L11,13" stroke="#E01010" stroke-width="1" fill="none"/><polygon points="9.5,11 13.5,13 10,15" fill="#901010"/></svg>
<div class="t" style="left:459px;top:254.3px;letter-spacing:0.2px">Перейти</div>
<svg style="left:506px;top:260px" width="5" height="3" viewBox="0 0 5 3"><polygon points="0,0 5,0 2.5,3" fill="#000"/></svg>
<div class="sep" style="left:517px;top:252px;height:18px"></div>
<svg style="left:525.5px;top:256.5px" width="10" height="10" viewBox="0 0 10 10"><circle cx="3.7" cy="3.6" r="3" fill="none" stroke="#000" stroke-width="1"/><path d="M5.9,5.9 L8.6,8.6" stroke="#000" stroke-width="1.9"/></svg>
<svg style="left:547px;top:256px" width="15" height="9" viewBox="0 0 15 9"><polygon points="0,4.5 5,0 5,2 15,2 15,7 5,7 5,9" fill="#2E2E9C"/></svg>
<svg style="left:569px;top:256px" width="15" height="9" viewBox="0 0 15 9"><polygon points="15,4.5 10,0 10,2 0,2 0,7 10,7 10,9" fill="#2E2E9C"/></svg>
<svg style="left:592px;top:253px" width="15" height="15" viewBox="0 0 15 15"><rect x="0" y="0" width="15" height="15" fill="#9CCAF0"/><rect x="0.5" y="0.5" width="14" height="14" fill="none" stroke="#7AB0E4"/>
<polygon points="4,2 11,2 8.5,7.5 11,13 4,13 6.5,7.5" fill="#FFF8D0" stroke="#A08850" stroke-width="0.8"/><polygon points="5.5,3.5 9.5,3.5 7.5,7" fill="#E8C060"/><polygon points="5,12.3 10,12.3 7.5,9.5" fill="#E8C060"/><rect x="3.5" y="1.5" width="8" height="1" fill="#806830"/><rect x="3.5" y="12.5" width="8" height="1" fill="#806830"/></svg>
<div class="grid" style="left:17px;top:274px;width:702px;height:185px">
  <div class="hd" style="left:0;top:0;width:700px;height:14px"></div>
  <div class="hd dk" style="left:278px;top:0;width:127px;height:14px"></div>
  <div class="a" style="left:687px;top:0;width:13px;height:183px;background:#FEFBF0"></div>
  <div class="vl" style="left:686px;top:0;height:183px;background:#D5D2C6"></div>
  <div class="hl" style="left:0;top:14px;width:687px"></div>
  <div class="hl" style="left:0;top:31px;width:687px"></div>
  <div class="hl" style="left:0;top:48px;width:687px"></div>
  <div class="hl" style="left:0;top:65px;width:687px"></div>
  <div class="hl" style="left:0;top:82px;width:687px"></div>
  <div class="hl" style="left:0;top:99px;width:687px"></div>
  <div class="hl" style="left:0;top:116px;width:687px"></div>
  <div class="hl" style="left:0;top:133px;width:687px"></div>
  <div class="hl" style="left:0;top:150px;width:687px"></div>
  <div class="hl" style="left:0;top:167px;width:687px"></div>
  <div class="hl" style="left:0;top:184px;width:687px"></div>
  <div class="vl" style="left:33px;top:0;height:184px"></div>
  <div class="vl" style="left:89px;top:0;height:184px"></div>
  <div class="vl" style="left:123px;top:0;height:184px"></div>
  <div class="vl" style="left:233px;top:0;height:184px"></div>
  <div class="vl" style="left:277px;top:0;height:184px"></div>
  <div class="vl" style="left:405px;top:0;height:184px"></div>
  <div class="vl" style="left:475px;top:0;height:184px"></div>
  <div class="vl" style="left:584px;top:0;height:184px"></div>
  <div class="t" style="left:35.3px;top:1.5px">Отключи...</div>
  <div class="t" style="left:92px;top:1.5px">Поиск</div>
  <div class="t" style="left:126px;top:1.5px">Источник</div>
  <div class="t" style="left:235.5px;top:1.5px">Получ...</div>
  <div class="t" style="left:279.7px;top:1.5px">Приемник</div>
  <div class="t" style="left:407.5px;top:1.5px">Правило ко...</div>
  <div class="t" style="left:478.3px;top:1.5px">Тип источника</div>
  <div class="t" style="left:587.5px;top:1.5px">Тип приемника</div>
  <svg class="dash" style="left:19px;top:21px" viewBox="0 0 9 4"><rect x="1" y="1" width="8" height="3" fill="#6E86B8"/><rect x="0" y="0" width="8" height="3" fill="#3A80EE"/><rect x="1" y="0" width="6" height="1" fill="#7CB2FA"/></svg>
  <div class="cb" style="left:36px;top:17px"></div>
  <div class="cb" style="left:92px;top:17px"></div>
  <div class="cb" style="left:236px;top:17px"></div>
  <div class="t" style="left:126px;top:17px;letter-spacing:0.08px">ПометкаУдаления</div>
  <div class="t" style="left:280px;top:17px;letter-spacing:0.08px">ПометкаУдаления</div>
  <div class="t" style="left:477.5px;top:17px">Число (1.0)</div>
  <div class="t" style="left:587.5px;top:17px">Булево</div>
  <svg class="dash" style="left:19px;top:38px" viewBox="0 0 9 4"><rect x="1" y="1" width="8" height="3" fill="#6E86B8"/><rect x="0" y="0" width="8" height="3" fill="#3A80EE"/><rect x="1" y="0" width="6" height="1" fill="#7CB2FA"/></svg>
  <div class="cb" style="left:36px;top:34px"></div>
  <div class="cb" style="left:92px;top:34px"></div>
  <div class="cb" style="left:236px;top:34px"></div>
  <div class="t" style="left:126px;top:34px;letter-spacing:0.08px">Код</div>
  <div class="t" style="left:280px;top:34px;letter-spacing:0.08px">Код</div>
  <div class="t" style="left:477.5px;top:34px">Строка (П8)</div>
  <div class="t" style="left:587.5px;top:34px">Строка (Ф5)</div>
  <svg class="dash" style="left:19px;top:55px" viewBox="0 0 9 4"><rect x="1" y="1" width="8" height="3" fill="#6E86B8"/><rect x="0" y="0" width="8" height="3" fill="#3A80EE"/><rect x="1" y="0" width="6" height="1" fill="#7CB2FA"/></svg>
  <div class="cb" style="left:36px;top:51px"></div>
  <div class="cb" style="left:92px;top:51px"></div>
  <div class="cb" style="left:236px;top:51px"></div>
  <div class="t" style="left:126px;top:51px;letter-spacing:0.08px">Наименование</div>
  <div class="t" style="left:280px;top:51px;letter-spacing:0.08px">Наименование</div>
  <div class="t" style="left:477.5px;top:51px">Строка (П30)</div>
  <div class="t" style="left:587.5px;top:51px">Строка (П50)</div>
  <svg class="dash" style="left:19px;top:72px" viewBox="0 0 9 4"><rect x="1" y="1" width="8" height="3" fill="#6E86B8"/><rect x="0" y="0" width="8" height="3" fill="#3A80EE"/><rect x="1" y="0" width="6" height="1" fill="#7CB2FA"/></svg>
  <div class="cb" style="left:36px;top:68px"></div>
  <div class="cb" style="left:92px;top:68px"></div>
  <div class="cb" style="left:236px;top:68px"></div>
  <div class="t" style="left:126px;top:68px;letter-spacing:0.08px">ЭтоГруппа</div>
  <div class="t" style="left:280px;top:68px;letter-spacing:0.08px">ЭтоГруппа</div>
  <div class="t" style="left:477.5px;top:68px">Число (1.0)</div>
  <div class="t" style="left:587.5px;top:68px">Булево</div>
  <svg class="dash" style="left:19px;top:89px" viewBox="0 0 9 4"><rect x="1" y="1" width="8" height="3" fill="#6E86B8"/><rect x="0" y="0" width="8" height="3" fill="#3A80EE"/><rect x="1" y="0" width="6" height="1" fill="#7CB2FA"/></svg>
  <div class="cb" style="left:36px;top:85px"></div>
  <div class="cb" style="left:92px;top:85px"></div>
  <div class="cb" style="left:236px;top:85px"></div>
  <div class="t" style="left:126px;top:85px;letter-spacing:0.08px">Родитель</div>
  <div class="t" style="left:280px;top:85px;letter-spacing:0.08px">Родитель</div>
  <div class="t" style="left:407.5px;top:85px;letter-spacing:0.18px">Контрагенты</div>
  <div class="t" style="left:477.5px;top:85px">СправочникСсылк...</div>
  <div class="t" style="left:587.5px;top:85px">СправочникСсыл...</div>
  <svg class="dash" style="left:19px;top:106px" viewBox="0 0 9 4"><rect x="1" y="1" width="8" height="3" fill="#6E86B8"/><rect x="0" y="0" width="8" height="3" fill="#3A80EE"/><rect x="1" y="0" width="6" height="1" fill="#7CB2FA"/></svg>
  <div class="cb" style="left:36px;top:102px"></div>
  <div class="cb" style="left:92px;top:102px"></div>
  <div class="cb" style="left:236px;top:102px"></div>
  <div class="t" style="left:126px;top:102px;letter-spacing:0.08px">ИНН</div>
  <div class="t" style="left:280px;top:102px;letter-spacing:0.08px">ИНН</div>
  <div class="t" style="left:477.5px;top:102px">Строка (П20)</div>
  <div class="t" style="left:587.5px;top:102px">Строка (П12)</div>
  <svg class="dash" style="left:19px;top:123px" viewBox="0 0 9 4"><rect x="1" y="1" width="8" height="3" fill="#6E86B8"/><rect x="0" y="0" width="8" height="3" fill="#3A80EE"/><rect x="1" y="0" width="6" height="1" fill="#7CB2FA"/></svg>
  <div class="cb" style="left:36px;top:119px"></div>
  <div class="cb" style="left:92px;top:119px"></div>
  <div class="cb" style="left:236px;top:119px"></div>
  <div class="a" style="left:278px;top:117px;width:127px;height:16px;background:#000080;box-sizing:border-box;border:1px dotted #D8D070"></div>
  <div class="t" style="left:280px;top:119px;letter-spacing:0.08px;color:#fff">ЮрФизЛицо</div>
  <div class="t" style="left:587.5px;top:119px">ПеречислениеСс...</div>
  <svg class="dash" style="left:19px;top:140px" viewBox="0 0 9 4"><rect x="1" y="1" width="8" height="3" fill="#6E86B8"/><rect x="0" y="0" width="8" height="3" fill="#3A80EE"/><rect x="1" y="0" width="6" height="1" fill="#7CB2FA"/></svg>
  <div class="cb" style="left:36px;top:136px"></div>
  <div class="cb" style="left:92px;top:136px"></div>
  <div class="cb" style="left:236px;top:136px"></div>
  <div class="t" style="left:280px;top:136px;letter-spacing:0.08px">Покупатель</div>
  <div class="t" style="left:587.5px;top:136px">Булево</div>
  <svg class="dash" style="left:19px;top:157px" viewBox="0 0 9 4"><rect x="1" y="1" width="8" height="3" fill="#6E86B8"/><rect x="0" y="0" width="8" height="3" fill="#3A80EE"/><rect x="1" y="0" width="6" height="1" fill="#7CB2FA"/></svg>
  <div class="cb" style="left:36px;top:153px"></div>
  <div class="cb" style="left:92px;top:153px"></div>
  <div class="cb" style="left:236px;top:153px"></div>
  <div class="t" style="left:280px;top:153px;letter-spacing:0.08px">Поставщик</div>
  <div class="t" style="left:587.5px;top:153px">Булево</div>
  <svg class="dash" style="left:19px;top:174px" viewBox="0 0 9 4"><rect x="1" y="1" width="8" height="3" fill="#6E86B8"/><rect x="0" y="0" width="8" height="3" fill="#3A80EE"/><rect x="1" y="0" width="6" height="1" fill="#7CB2FA"/></svg>
  <div class="cb" style="left:36px;top:170px"></div>
  <div class="cb" style="left:92px;top:170px"></div>
  <div class="cb" style="left:236px;top:170px"></div>
  <div class="t" style="left:280px;top:170px;letter-spacing:0.08px">НаименованиеПолное</div>
  <div class="t" style="left:587.5px;top:170px">Строка (Неогр)</div>
  <div class="sb" style="left:688px;top:2px"></div><svg style="left:690px;top:4px" width="8" height="7" viewBox="0 0 8 7"><path d="M0.5,5 L4,1.5 L7.5,5" stroke="#000" stroke-width="1.1" fill="none"/></svg>
  <div class="sb" style="left:688px;top:86px"></div>
  <div class="sb" style="left:688px;top:171px"></div><svg style="left:690px;top:173px" width="8" height="7" viewBox="0 0 8 7"><path d="M0.5,1.5 L4,5 L7.5,1.5" stroke="#000" stroke-width="1.1" fill="none"/></svg>
</div>
</body>
</html>
